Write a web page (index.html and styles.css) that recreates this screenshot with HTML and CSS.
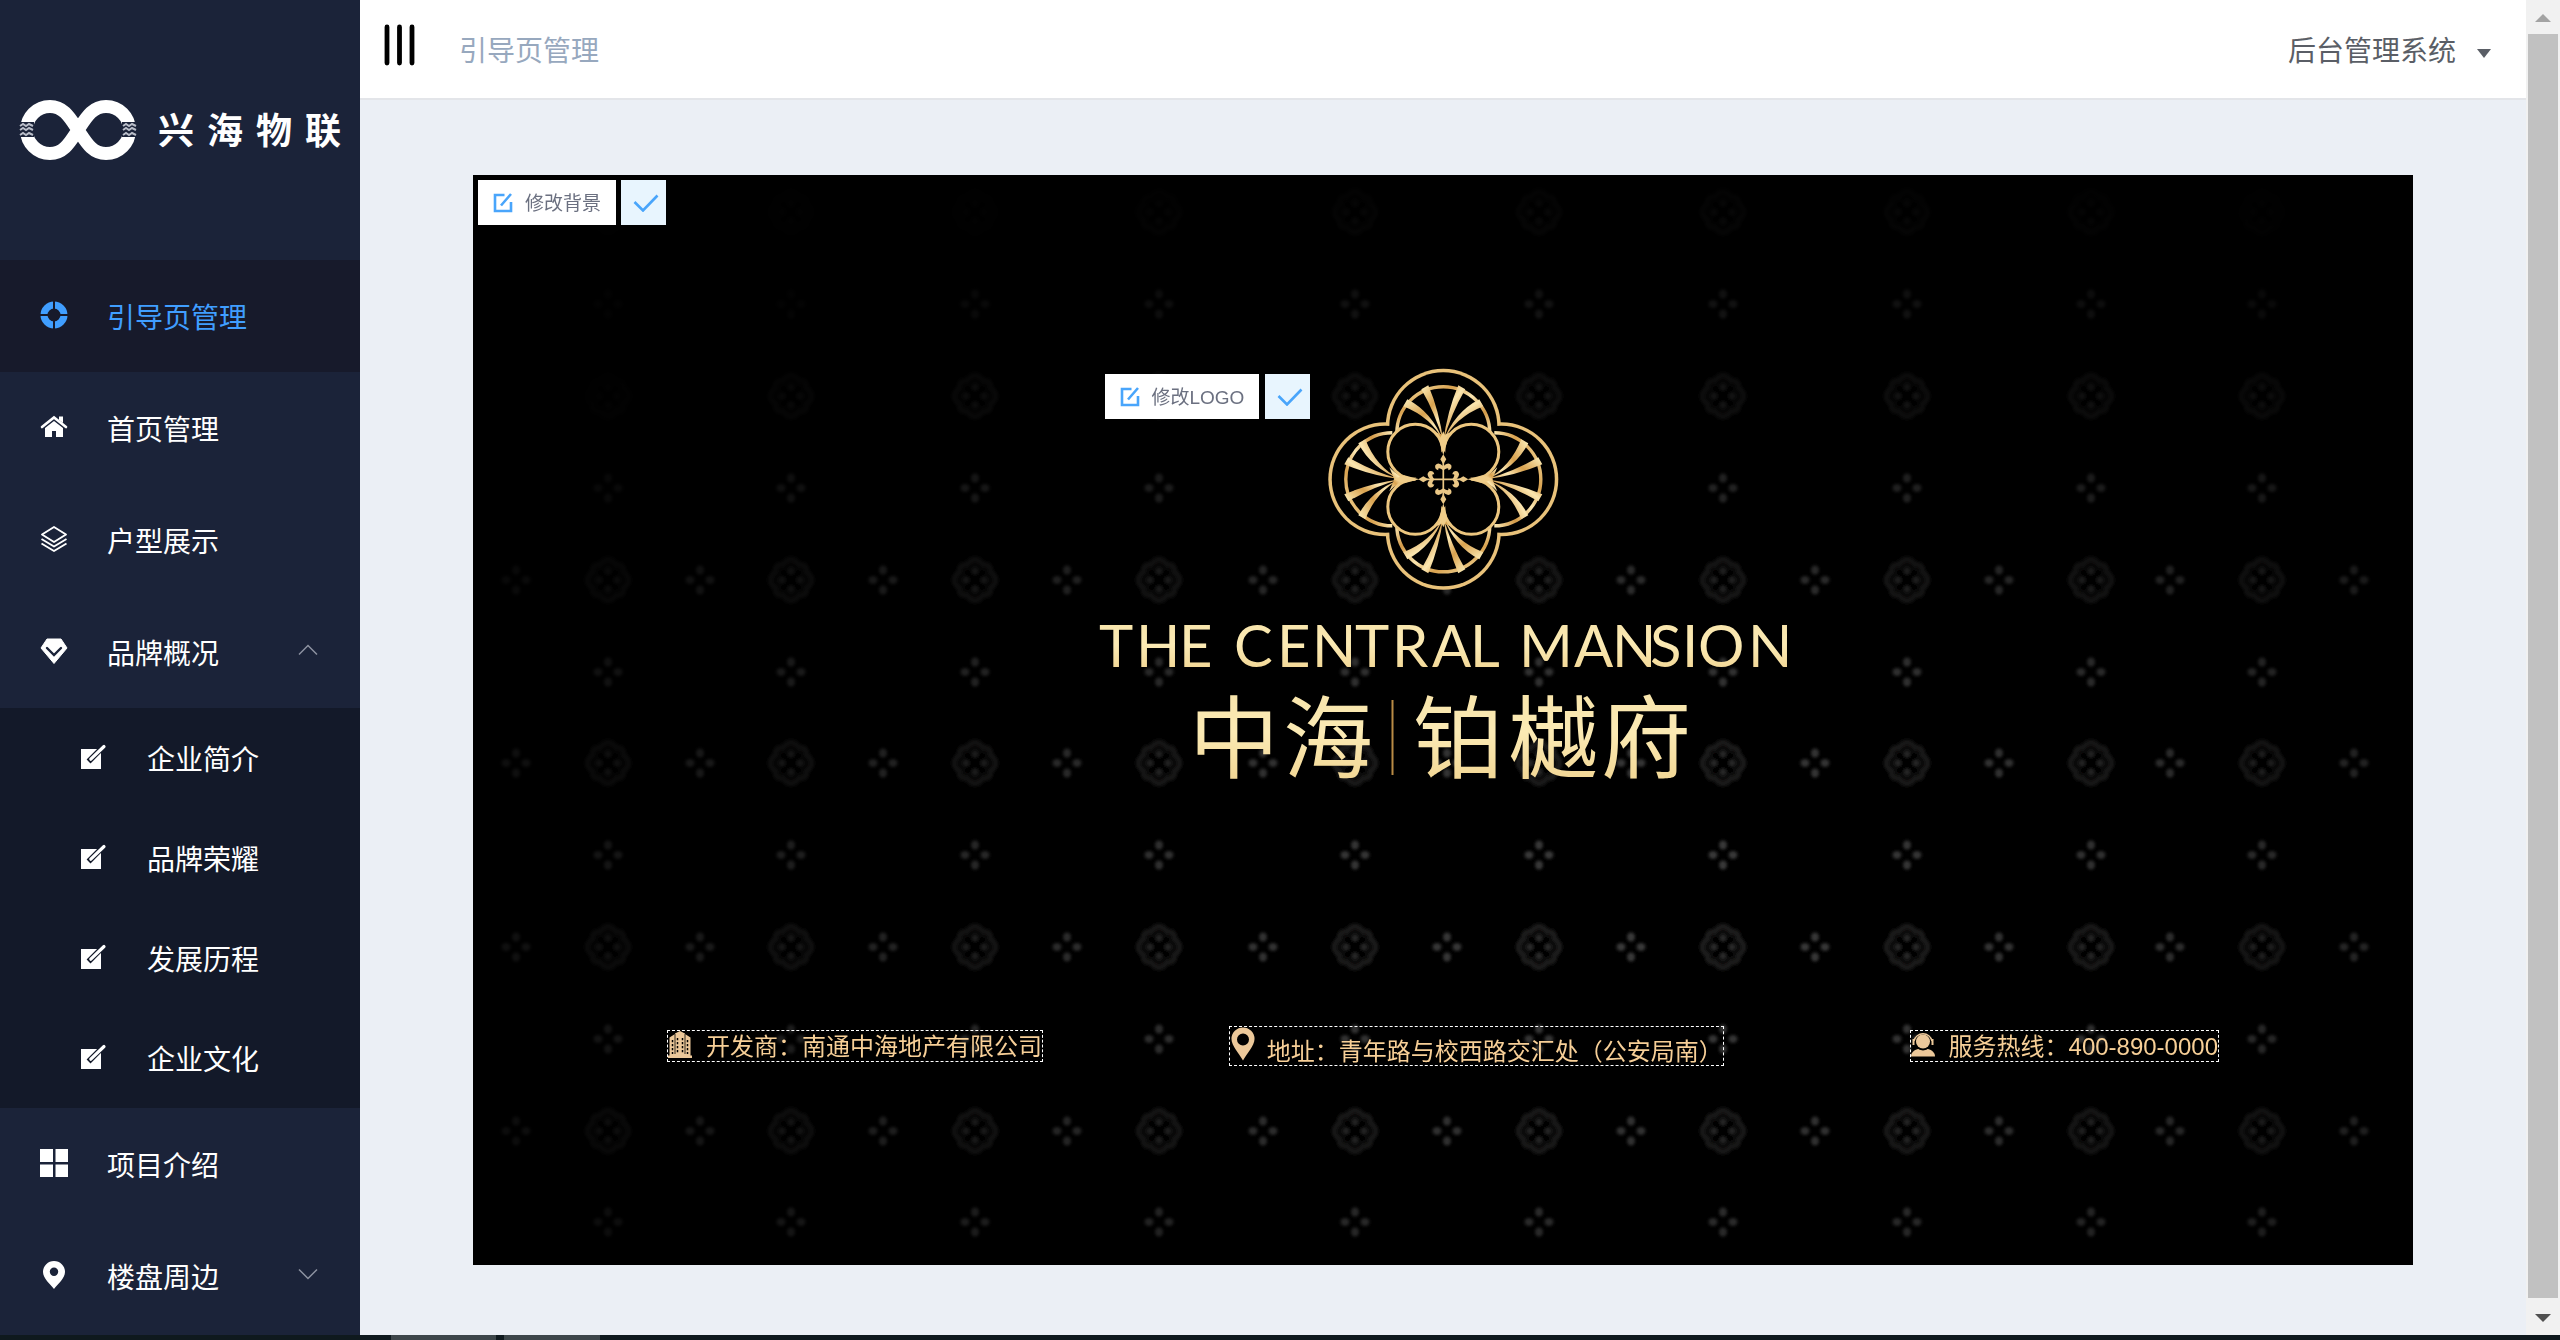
FILE: index.html
```html
<!DOCTYPE html>
<html lang="zh-CN">
<head>
<meta charset="utf-8">
<title>后台管理系统</title>
<link rel="stylesheet" href="styles.css">
</head>
<body>
<svg class="defs" width="0" height="0">
  <defs>
    <symbol id="edit-fill" viewBox="0 0 28 28">
      <path fill="currentColor" d="M1 6h20v20H1z"/>
      <path d="M10.500 16.500l13-13" stroke="#131929" stroke-width="5.500" stroke-linecap="square"/>
      <path d="M10.800 16.200L24 3.500" stroke="currentColor" stroke-width="3.200" stroke-linecap="round"/>
    </symbol>
    <symbol id="edit-line" viewBox="0 0 20 20">
      <path d="M11.500 2H2v16h16V9M8 12.500L18 1" fill="none" stroke="#49a5fb" stroke-width="2.600"/>
    </symbol>
    <symbol id="check" viewBox="0 0 26 18">
      <path d="M1.500 8l8.500 8.500L24.500 1.500" fill="none" stroke="#49a5fb" stroke-width="2.600"/>
    </symbol>
  </defs>
</svg>

<div class="app">
  <aside class="sidebar">
    <div class="brand">
      <svg class="brand-mark" viewBox="0 0 118 60">
        <path d="M59 30C51 18 45 6.500 31 6.500A23.500 23.500 0 0 0 31 53.500C45 53.500 51 42 59 30C67 18 73 6.500 87 6.500A23.500 23.500 0 0 1 87 53.500C73 53.500 67 42 59 30Z" fill="none" stroke="#fff" stroke-width="13"/>
        <path d="M0 22h15v15H0zM103 22h15v15h-15z" fill="#1b2339"/>
        <path d="M1 26l3-2 3 2 3-2 4 2M1 30l3-2 3 2 3-2 4 2M1 35l3-2 3 2 3-2 4 2M104 26l3-2 3 2 3-2 4 2M104 30l3-2 3 2 3-2 4 2M104 35l3-2 3 2 3-2 4 2" fill="none" stroke="#b9bdc8" stroke-width="2"/>
      </svg>
      <span class="brand-name">兴海物联</span>
    </div>
    <nav class="menu">
      <a class="item active">
        <svg class="icon" viewBox="0 0 28 28"><circle cx="14" cy="14" r="10" fill="none" stroke="#409eff" stroke-width="7"/><path d="M14 0v28M0 14h28" stroke="#171a2b" stroke-width="2"/></svg>
        <span>引导页管理</span>
      </a>
      <a class="item">
        <svg class="icon" viewBox="0 0 28 28"><path d="M2 14L14 4.500 26 14" fill="none" stroke="#fff" stroke-width="2.600" stroke-linecap="round"/><path d="M19 3.500h4V10l-4-3z" fill="#fff"/><path d="M14 8l9 7v9h-7v-6h-4v6H5v-9z" fill="#fff"/></svg>
        <span>首页管理</span>
      </a>
      <a class="item">
        <svg class="icon" viewBox="0 0 28 28" fill="none" stroke="#fff" stroke-width="1.900" stroke-linejoin="round"><path d="M14 2l12 7.500L14 17 2 9.500z"/><path d="M1.500 14L14 21.500 26.500 14M1.500 18.500L14 26l12.500-7.500"/></svg>
        <span>户型展示</span>
      </a>
      <a class="item">
        <svg class="icon" viewBox="0 0 28 28"><path d="M7 2h14l6 9-13 15.500L1 11z" fill="#fff" stroke="#fff" stroke-linejoin="round"/><path d="M7 11l7 7 7-7" fill="none" stroke="#1b2339" stroke-width="2.400" stroke-linecap="round"/></svg>
        <span>品牌概况</span>
        <svg class="chevron" viewBox="0 0 20 12"><path d="M1 10.500l9-9 9 9" fill="none" stroke="#8d92a0" stroke-width="1.500"/></svg>
      </a>
      <div class="submenu">
        <a class="subitem"><svg class="icon"><use href="#edit-fill"/></svg><span>企业简介</span></a>
        <a class="subitem"><svg class="icon"><use href="#edit-fill"/></svg><span>品牌荣耀</span></a>
        <a class="subitem"><svg class="icon"><use href="#edit-fill"/></svg><span>发展历程</span></a>
        <a class="subitem"><svg class="icon"><use href="#edit-fill"/></svg><span>企业文化</span></a>
      </div>
      <a class="item">
        <svg class="icon" viewBox="0 0 28 28"><path d="M0 0h13v13H0zM15.500 0H28v13H15.500zM0 15.500h13V28H0zM15.500 15.500H28V28H15.500z" fill="#fff"/></svg>
        <span>项目介绍</span>
      </a>
      <a class="item">
        <svg class="icon" viewBox="0 0 28 28"><path fill-rule="evenodd" d="M14 0a11 11 0 0 1 11 11c0 6-7 12-11 17C10 23 3 17 3 11A11 11 0 0 1 14 0zm0 6.500a4.200 4.200 0 1 0 0 8.400 4.200 4.200 0 0 0 0-8.400z" fill="#fff"/></svg>
        <span>楼盘周边</span>
        <svg class="chevron" viewBox="0 0 20 12"><path d="M1 1.500l9 9 9-9" fill="none" stroke="#8d92a0" stroke-width="1.500"/></svg>
      </a>
    </nav>
  </aside>

  <div class="main">
    <header class="topbar">
      <svg class="toggle" viewBox="0 0 32 42"><path d="M4 3v36M16.500 3v36M29 3v36" stroke="#000" stroke-width="4.800" stroke-linecap="round"/></svg>
      <span class="crumb">引导页管理</span>
      <span class="user">后台管理系统</span>
      <i class="caret"></i>
    </header>

    <section class="banner">
      <svg class="pattern" viewBox="473 175 1940 1090">
        <defs>
          <radialGradient id="fade" gradientUnits="userSpaceOnUse" cx="0" cy="0" r="1" gradientTransform="translate(1640 900) scale(1400 760)">
            <stop offset="0" stop-color="#fff"/>
            <stop offset=".35" stop-color="#ccc"/>
            <stop offset=".7" stop-color="#666"/>
            <stop offset="1" stop-color="#0c0c0c"/>
          </radialGradient>
          <mask id="fade-mask" maskUnits="userSpaceOnUse" x="473" y="175" width="1940" height="1090">
            <rect x="473" y="175" width="1940" height="1090" fill="url(#fade)"/>
          </mask>
          <filter id="soft"><feGaussianBlur stdDeviation="1.800"/></filter>
          <g id="bud" fill="#3a3a3a">
            <ellipse cy="-10" rx="4" ry="4.500"/><ellipse cy="10" rx="4" ry="4.500"/>
            <ellipse cx="-10" rx="4.500" ry="4"/><ellipse cx="10" rx="4.500" ry="4"/>
          </g>
          <g id="flower">
            <path d="M-8-16Q0-26 8-16Q16-16 16-8Q26 0 16 8Q16 16 8 16Q0 26-8 16Q-16 16-16 8Q-26 0-16-8Q-16-16-8-16Z" fill="#0e0d0d" stroke="#1f1d1c" stroke-width="5"/>
            <path d="M-9-9L9 9M9-9L-9 9" stroke="#000" stroke-width="6"/>
            <circle cy="-9" r="3" fill="#2c2c2c"/><circle cy="9" r="3" fill="#2c2c2c"/><circle cx="-9" r="3" fill="#2c2c2c"/><circle cx="9" r="3" fill="#2c2c2c"/>
          </g>
          <g id="col-a">
            <use href="#flower" y="212"/><use href="#bud" y="304"/><use href="#flower" y="396"/><use href="#bud" y="488"/><use href="#flower" y="580"/><use href="#bud" y="672"/><use href="#flower" y="763"/><use href="#bud" y="855"/><use href="#flower" y="947"/><use href="#bud" y="1039"/><use href="#flower" y="1131"/><use href="#bud" y="1222"/>
          </g>
          <g id="col-b">
            <use href="#bud" y="580"/><use href="#bud" y="763"/><use href="#bud" y="947"/><use href="#bud" y="1131"/>
          </g>
        </defs>
        <g mask="url(#fade-mask)"><g filter="url(#soft)">
          <use href="#col-a" x="608"/><use href="#col-a" x="791"/><use href="#col-a" x="975"/><use href="#col-a" x="1159"/><use href="#col-a" x="1355"/><use href="#col-a" x="1539"/><use href="#col-a" x="1723"/><use href="#col-a" x="1907"/><use href="#col-a" x="2091"/><use href="#col-a" x="2262"/>
          <use href="#col-b" x="516"/><use href="#col-b" x="700"/><use href="#col-b" x="883"/><use href="#col-b" x="1067"/><use href="#col-b" x="1263"/><use href="#col-b" x="1447"/><use href="#col-b" x="1631"/><use href="#col-b" x="1815"/><use href="#col-b" x="1999"/><use href="#col-b" x="2170"/><use href="#col-b" x="2354"/>
        </g></g>
      </svg>

      <div class="tools">
        <button class="btn"><svg class="edit"><use href="#edit-line"/></svg><span>修改背景</span></button>
        <button class="btn ok"><svg class="tick"><use href="#check"/></svg></button>
      </div>

      <div class="logo">
        <svg class="logo-art" viewBox="1100 369 687 420">
          <defs>
            <linearGradient id="gold" x1="0" y1="0" x2="1" y2="1">
              <stop offset="0" stop-color="#fdf0bd"/><stop offset=".3" stop-color="#d9a24f"/><stop offset=".5" stop-color="#fbe6b0"/><stop offset=".75" stop-color="#d39a48"/><stop offset="1" stop-color="#fae7b4"/>
            </linearGradient>
            <linearGradient id="gold-text" x1="0" y1="0" x2="0" y2="1">
              <stop offset="0" stop-color="#f6e1a6"/><stop offset=".5" stop-color="#fbeab4"/><stop offset="1" stop-color="#efd08a"/>
            </linearGradient>
            <g id="lobe">
              <path d="M-46.500-46A46.500 46.500 0 1 1 46.500-46" fill="none" stroke="url(#gold)" stroke-width="3.400"/>
              <g fill="url(#gold)">
                <path d="M0-38Q-12-62-40-73L-36-80Q-11-67 0-38Q11-67 36-80L40-73Q12-62 0-38Z"/>
                <path d="M0-38Q-8-66-22-90L-15-94Q-4-68 0-38Q4-68 15-94L22-90Q8-66 0-38Z"/>
                <path d="M0-26Q-2-40-12-49L0-44L12-49Q2-40 0-26Z"/>
              </g>
            </g>
            <g id="lily">
              <path d="M0-25L3-20 0-15-3-20ZM0-13Q-5-18-8-14Q-9-10-5-9Q-6-13 0-9Q6-13 5-9Q9-10 8-14Q5-18 0-13Z"/>
            </g>
          </defs>
          <g transform="translate(1443.300 479.300)">
            <g fill="#e9c27a"><circle cy="-53" r="57.500"/><circle cy="53" r="57.500"/><circle cx="-58" r="57"/><circle cx="58" r="57"/></g>
            <g fill="#000"><circle cy="-53" r="54"/><circle cy="53" r="54"/><circle cx="-58" r="53.500"/><circle cx="58" r="53.500"/></g>
            <use href="#lobe"/><use href="#lobe" transform="rotate(180)"/>
            <use href="#lobe" transform="translate(5 0) rotate(90)"/><use href="#lobe" transform="translate(-5 0) rotate(270)"/>
            <g fill="#000" stroke="#ecc67f" stroke-width="3"><circle cx="-28" cy="-27.500" r="27.500"/><circle cx="28" cy="-27.500" r="27.500"/><circle cx="-28" cy="27.500" r="27.500"/><circle cx="28" cy="27.500" r="27.500"/></g>
            <path d="M0-29L29 0 0 29-29 0Z" fill="#000"/>
            <path d="M0-48L4-39 0-24-4-39ZM0 48L4 39 0 24-4 39ZM-50 0L-39-4-24 0-39 4ZM50 0L39-4 24 0 39 4Z" fill="#f0cd89"/>
            <g fill="#eac786"><use href="#lily"/><use href="#lily" transform="rotate(90)"/><use href="#lily" transform="rotate(180)"/><use href="#lily" transform="rotate(270)"/></g>
            <path d="M0-22V22M-22 0H22" stroke="#eac786" stroke-width="1.700"/>
          </g>
          <text class="logo-en" y="667" x="1099 1136 1179 1222 1234 1277 1312 1355 1392 1432 1470 1510 1519 1574 1612 1650 1682 1698 1748">THE CENTRAL MANSION</text>
          <text class="logo-zh" y="771" x="1189 1283 1413 1508 1601">中海铂樾府</text>
          <path d="M1392.500 700v75" stroke="#b98b45" stroke-width="2"/>
        </svg>
        <div class="tools">
          <button class="btn"><svg class="edit"><use href="#edit-line"/></svg><span>修改LOGO</span></button>
          <button class="btn ok"><svg class="tick"><use href="#check"/></svg></button>
        </div>
      </div>

      <div class="contacts">
        <div class="contact">
          <svg class="c-icon" viewBox="0 0 24 28"><path d="M1.500 25V6.500L7 3v22zM7 25V2.500L12 0l5 2.500V25zM17 25V3l5.500 3.500V25zM0 24.500h24V27H0z" fill="#ecc89a"/><path d="M4.500 9v14M9.500 7v16M14.500 7v16M19.500 9v14" stroke="#000" stroke-width="1.500" stroke-dasharray="2.200 1.800"/><path d="M7 3v20M17 3v20" stroke="#000" stroke-width=".8"/></svg>
          <span>开发商：南通中海地产有限公司</span>
        </div>
        <div class="contact address">
          <svg class="c-icon pin" viewBox="0 0 26 36"><path fill-rule="evenodd" d="M13 0a12.500 12.500 0 0 1 12.500 12.500C25.500 20 17 28 13 36 9 28 .5 20 .5 12.500A12.500 12.500 0 0 1 13 0zm0 6.500a6.500 6.500 0 1 0 0 13 6.500 6.500 0 0 0 0-13z" fill="#ecc89a"/></svg>
          <span>地址：青年路与校西路交汇处（公安局南）</span>
        </div>
        <div class="contact">
          <svg class="c-icon" viewBox="0 0 24 28"><path d="M0 25.500c0-4 3-6.500 7-7.500h10c4 1 7 3.500 7 7.500z" fill="#ecc89a"/><circle cx="12" cy="10.500" r="9" fill="#000"/><circle cx="12" cy="10.500" r="7" fill="#ecc89a"/><path d="M3 10a9.200 9.200 0 0 1 18 0" fill="none" stroke="#ecc89a" stroke-width="1.400"/><path d="M1.500 8h2v6h-2zM20.500 8h2v6h-2z" fill="#ecc89a"/></svg>
          <span>服务热线：400-890-0000</span>
        </div>
      </div>
    </section>
  </div>

  <div class="scrollbar"><i class="arrow up"></i><div class="thumb"></div><i class="arrow down"></i></div>
</div>
<footer class="taskbar"><i></i><i></i></footer>
</body>
</html>
```

FILE: styles.css
```css
* { box-sizing: border-box; }
body {
  margin: 0;
  height: 1340px;
  overflow: hidden;
  display: flex;
  flex-direction: column;
  font-family: "Liberation Sans", "Noto Sans CJK SC", sans-serif;
  font-size: 28px;
  background: #ebeff5;
}
svg { display: block; flex: none; }
.defs { position: absolute; }
.app { display: flex; height: 1335px; flex: none; overflow: hidden; }

.sidebar { width: 360px; flex: none; background: #1b2339; color: #fff; overflow: hidden; }
.brand { height: 260px; display: flex; align-items: center; padding-left: 19px; }
.brand-mark { width: 118px; height: 60px; }
.brand-name {
  margin-left: 21px;
  padding-top: 3px;
  font-size: 36px;
  line-height: 60px;
  font-weight: 700;
  letter-spacing: 13px;
  white-space: nowrap;
}
.item, .subitem { display: flex; align-items: center; line-height: 40px; }
.item { height: 112px; padding: 0 42px 0 40px; }
.item span, .subitem span { margin-left: 39px; padding-top: 6px; }
.item.active { background: #171a2b; color: #409eff; }
.icon { width: 28px; height: 28px; margin-bottom: 2px; }
.chevron { width: 20px; height: 12px; margin-left: auto; margin-bottom: 4px; }
.submenu { background: #131929; }
.subitem { height: 100px; padding-left: 80px; }

.main { flex: 1; min-width: 0; }
.topbar {
  height: 100px;
  display: flex;
  align-items: center;
  padding: 0 35px 0 23px;
  background: #fff;
  border-bottom: 2px solid #e3e5e9;
}
.toggle { width: 32px; height: 42px; margin-bottom: 8px; }
.crumb { margin-left: 44px; margin-top: -1px; color: #97a8be; }
.user { margin-left: auto; margin-top: -1px; color: #5a5e66; }
.caret {
  margin: 8px 0 0 21px;
  border: 7px solid transparent;
  border-top: 9px solid #5a5e66;
  border-bottom: 0;
}

.banner {
  position: relative;
  width: 1940px;
  height: 1090px;
  margin: 75px 0 0 113px;
  padding-top: 194px;
  background: #000;
}
.pattern { position: absolute; inset: 0; width: 100%; height: 100%; }
.tools { position: absolute; left: 5px; top: 5px; display: flex; gap: 5px; }
.btn {
  height: 45px;
  display: flex;
  align-items: center;
  padding: 0 15px;
  border: 0;
  background: #fff;
  color: #6b7080;
  font: 19px "Liberation Sans", "Noto Sans CJK SC", sans-serif;
}
.btn.ok { width: 45px; padding: 0; justify-content: center; background: #e8f5fe; }
.btn span { margin: -2px 0 0 12px; white-space: nowrap; }
.edit { width: 20px; height: 20px; }
.tick { width: 26px; height: 18px; margin: 1px 0 0 4px; }

.logo { position: relative; width: 687px; height: 420px; margin: 0 auto; }
.logo-art { width: 687px; height: 420px; overflow: visible; }
.logo .tools { gap: 6px; }
.logo-en { font: 58px Lato, sans-serif; fill: url(#gold-text); }
.logo-zh { font: 400 90px "Noto Sans CJK SC", sans-serif; fill: url(#gold-text); }

.contacts {
  position: relative;
  display: flex;
  justify-content: space-between;
  align-items: center;
  height: 40px;
  margin-top: 237px;
  padding: 0 194px;
}
.contact {
  display: flex;
  align-items: center;
  height: 32px;
  border: 1px dashed #fff;
  color: #f7cf97;
  font-size: 24px;
  line-height: 30px;
  white-space: nowrap;
}
.contact span { margin-left: 14px; padding-top: 2px; }
.c-icon { width: 24px; height: 28px; margin-bottom: 2px; }
.contact.address { height: 40px; }
.address span { margin-left: 11px; padding-top: 12px; }
.pin { width: 24px; height: 34px; margin: 0 1px 4px; }

.scrollbar {
  width: 34px;
  flex: none;
  display: flex;
  flex-direction: column;
  align-items: center;
  background: #f1f1f1;
}
.thumb { width: 30px; height: 1264px; background: #c1c1c1; }
.arrow { border: 8px solid transparent; }
.up { margin: 14px 0 12px; border-top: 0; border-bottom-color: #a3a3a3; }
.down { margin-top: 16px; border-bottom: 0; border-top-color: #505050; }

.taskbar { height: 5px; flex: none; display: flex; gap: 8px; padding-left: 391px; background: #0f191e; }
.taskbar i { width: 105px; background: #3d464a; }
.taskbar i + i { width: 96px; }
```
